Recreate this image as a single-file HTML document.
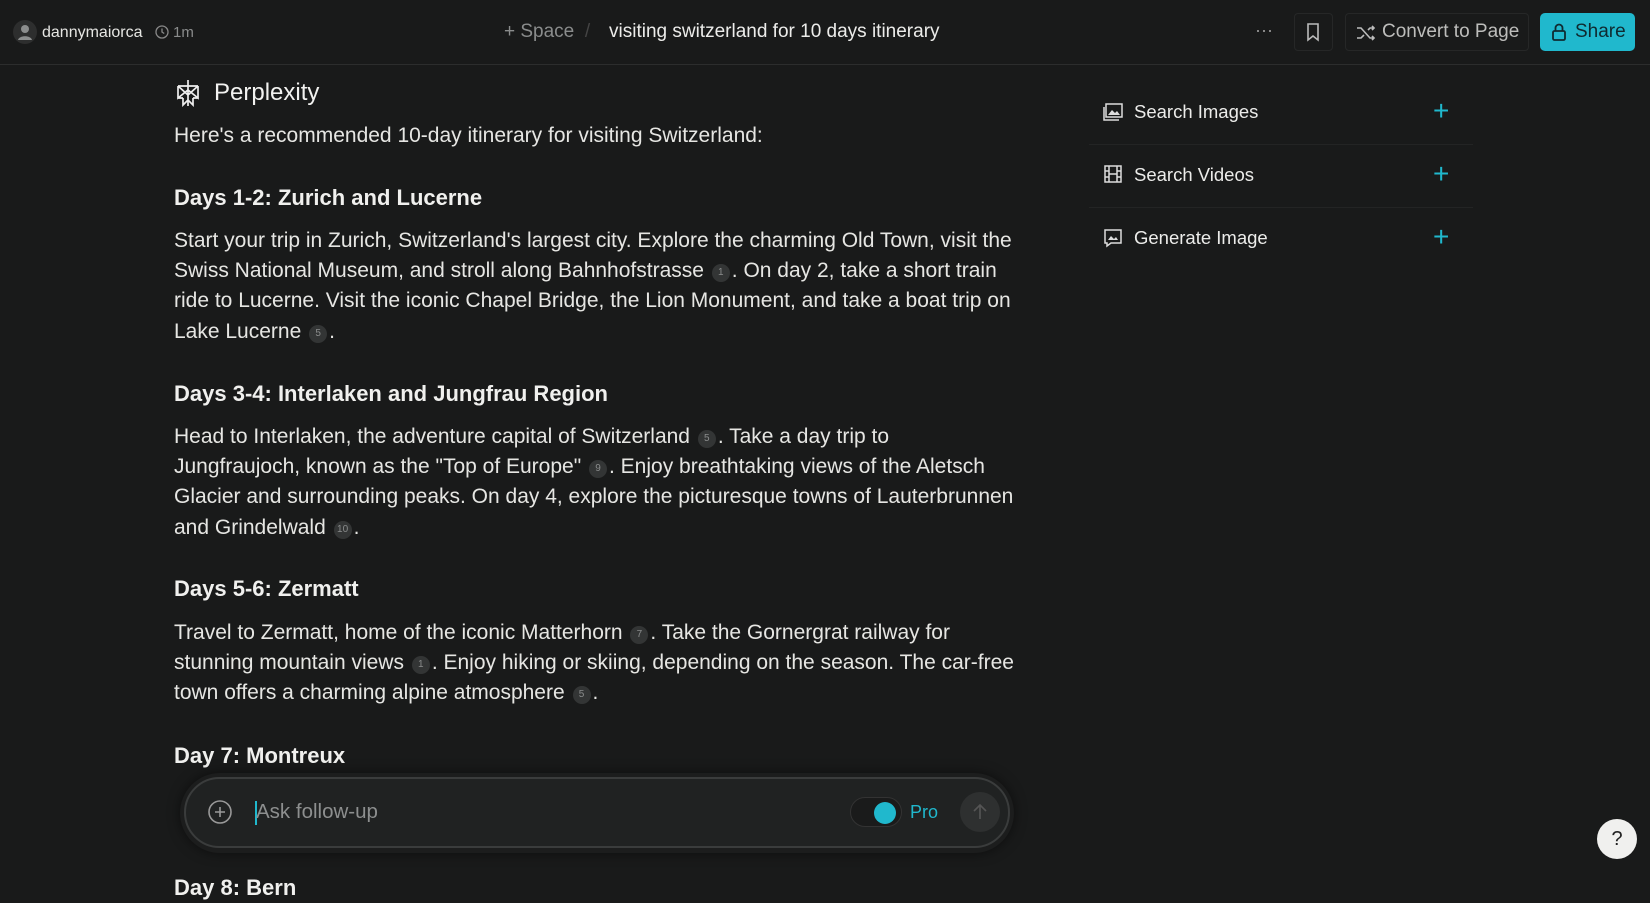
<!DOCTYPE html>
<html><head><meta charset="utf-8"><style>
*{box-sizing:border-box;margin:0;padding:0}
body{width:1650px;height:888px;background:#191a1a;color:#e8e8e6;font-family:"Liberation Sans",sans-serif;overflow:hidden;position:relative}
.hdr{position:absolute;left:0;top:0;width:1650px;height:65px;border-bottom:1px solid #2c2d2d}
.abs{position:absolute;white-space:nowrap}
.t{font-size:21px;color:#e6e6e3;position:absolute;left:174px;white-space:nowrap;line-height:30.2px}
.h{font-size:22px;font-weight:bold;color:#f0f0ee;position:absolute;left:174px;white-space:nowrap;line-height:30px}
.c{display:inline-block;width:18px;height:18px;border-radius:9px;background:#333535;color:#8a8c8c;font-size:10px;line-height:18px;text-align:center;vertical-align:2px;margin:0 2px;font-weight:normal}
.row{position:absolute;left:1089px;width:384px;height:60px;border-bottom:1px solid #232424}
.row span{position:absolute;left:45px;top:16px;font-size:18.5px;color:#ececea}
.row .p{position:absolute;left:344px;top:12px;color:#20b8cd;font-size:28px;font-weight:300;line-height:28px}
</style></head><body>
<div class="hdr"></div>
<svg class="abs" style="left:13px;top:20px" width="24" height="24" viewBox="0 0 24 24"><circle cx="12" cy="12" r="12" fill="#2d2e2e"/><circle cx="12" cy="9" r="4" fill="#8b8d8d"/><path d="M5 20c1-5 13-5 14 0z" fill="#8b8d8d"/></svg>
<div class="abs" style="left:42px;top:24px;font-size:16px;color:#e6e6e3">dannymaiorca</div>
<svg class="abs" style="left:155px;top:25px" width="14" height="14" viewBox="0 0 14 14"><circle cx="7" cy="7" r="6" fill="none" stroke="#888" stroke-width="1.3"/><path d="M7 3.5V7l2.2 1.5" fill="none" stroke="#888" stroke-width="1.3"/></svg>
<div class="abs" style="left:173px;top:24px;font-size:15px;color:#8a8c8c">1m</div>
<div class="abs" style="left:504px;top:21px;font-size:19px;color:#8a8c8c">+ Space&nbsp;&nbsp;<span style="color:#444">/</span></div>
<div class="abs" style="left:609px;top:21px;font-size:19px;color:#ececea">visiting switzerland for 10 days itinerary</div>
<div class="abs" style="left:1255px;top:20px;font-size:18px;color:#999">···</div>
<div class="abs" style="left:1294px;top:13px;width:39px;height:38px;border:1px solid #262727;border-radius:4px"></div>
<svg class="abs" style="left:1305px;top:22px" width="16" height="20" viewBox="0 0 16 20"><path d="M3 2h10v16l-5-4-5 4z" fill="none" stroke="#bbb" stroke-width="1.6"/></svg>
<div class="abs" style="left:1345px;top:13px;width:184px;height:38px;border:1px solid #262727;border-radius:4px"></div>
<svg class="abs" style="left:1356px;top:24px" width="20" height="18" viewBox="0 0 20 18"><path d="M1 4h4l9 10h4M1 14h4l3-3M12 6l2-2h4M16 2l2 2-2 2M16 12l2 2-2 2" fill="none" stroke="#bbb" stroke-width="1.6"/></svg>
<div class="abs" style="left:1382px;top:21px;font-size:19px;color:#bdbdbb">Convert to Page</div>
<div class="abs" style="left:1540px;top:13px;width:95px;height:38px;background:#20b8cd;border-radius:5px"></div>
<svg class="abs" style="left:1551px;top:22px" width="16" height="20" viewBox="0 0 16 20"><rect x="2" y="9" width="12" height="9" rx="1.5" fill="none" stroke="#0f2a30" stroke-width="1.8"/><path d="M4.5 9V6a3.5 3.5 0 0 1 7 0v3" fill="none" stroke="#0f2a30" stroke-width="1.8"/></svg>
<div class="abs" style="left:1575px;top:21px;font-size:19px;color:#0f2a30">Share</div>

<svg class="abs" style="left:175px;top:79px" width="26" height="28" viewBox="0 0 26 28"><path d="M13 1v26M3 7h20M3 7l10 9 10-9M3 7v12l10-8 10 8V7M8 19v7l5-5 5 5v-7M3 19h5M18 19h5" fill="none" stroke="#eee" stroke-width="1.7"/></svg>
<div class="abs" style="left:214px;top:79px;font-size:24px;color:#f2f2f0">Perplexity</div>
<div class="t" style="top:121px">Here's a recommended 10-day itinerary for visiting Switzerland:</div>
<div class="h" style="top:183px">Days 1-2: Zurich and Lucerne</div>
<div class="t" style="top:226px">Start your trip in Zurich, Switzerland's largest city. Explore the charming Old Town, visit the<br>Swiss National Museum, and stroll along Bahnhofstrasse <span class="c">1</span>. On day 2, take a short train<br>ride to Lucerne. Visit the iconic Chapel Bridge, the Lion Monument, and take a boat trip on<br>Lake Lucerne <span class="c">5</span>.</div>
<div class="h" style="top:379px">Days 3-4: Interlaken and Jungfrau Region</div>
<div class="t" style="top:422px">Head to Interlaken, the adventure capital of Switzerland <span class="c">5</span>. Take a day trip to<br>Jungfraujoch, known as the "Top of Europe" <span class="c">9</span>. Enjoy breathtaking views of the Aletsch<br>Glacier and surrounding peaks. On day 4, explore the picturesque towns of Lauterbrunnen<br>and Grindelwald <span class="c">10</span>.</div>
<div class="h" style="top:574px">Days 5-6: Zermatt</div>
<div class="t" style="top:618px">Travel to Zermatt, home of the iconic Matterhorn <span class="c">7</span>. Take the Gornergrat railway for<br>stunning mountain views <span class="c">1</span>. Enjoy hiking or skiing, depending on the season. The car-free<br>town offers a charming alpine atmosphere <span class="c">5</span>.</div>
<div class="h" style="top:741px">Day 7: Montreux</div>
<div class="h" style="top:873px">Day 8: Bern</div>

<div class="abs" style="left:180px;top:773px;width:834px;height:80px;border-radius:40px;background:#1c1d1d;box-shadow:0 0 12px rgba(0,0,0,.5)"></div>
<div class="abs" style="left:184px;top:777px;width:826px;height:71px;border-radius:36px;background:#202222;border:2px solid #3a3c3c"></div>
<svg class="abs" style="left:207px;top:799px" width="26" height="26" viewBox="0 0 26 26"><circle cx="13" cy="13" r="11" fill="none" stroke="#999" stroke-width="1.6"/><path d="M13 8v10M8 13h10" stroke="#999" stroke-width="1.6"/></svg>
<div class="abs" style="left:255px;top:801px;width:2px;height:24px;background:#20b8cd"></div>
<div class="abs" style="left:256px;top:800px;font-size:20.5px;color:#8d8f8f">Ask follow-up</div>
<div class="abs" style="left:850px;top:797px;width:52px;height:30px;border-radius:15px;border:1px solid #333;background:#1a1b1b"></div>
<div class="abs" style="left:874px;top:802px;width:22px;height:22px;border-radius:11px;background:#20b8cd"></div>
<div class="abs" style="left:910px;top:802px;font-size:18px;color:#20b8cd">Pro</div>
<div class="abs" style="left:960px;top:792px;width:40px;height:40px;border-radius:20px;background:#2e3030"></div>
<svg class="abs" style="left:970px;top:802px" width="20" height="20" viewBox="0 0 20 20"><path d="M10 17V3M4 9l6-6 6 6" fill="none" stroke="#555" stroke-width="1.6"/></svg>

<div class="row" style="top:85px"><svg class="abs" style="left:14px;top:18px" width="20" height="18" viewBox="0 0 20 18"><rect x="3" y="1" width="16" height="13" fill="none" stroke="#ddd" stroke-width="1.5"/><path d="M1 4v13h15" fill="none" stroke="#ddd" stroke-width="1.5"/><path d="M5 12l4-5 3 3 2-2 3 4z" fill="#ddd"/></svg><span>Search Images</span><div class="p">+</div></div>
<div class="row" style="top:148px"><svg class="abs" style="left:14px;top:17px" width="20" height="18" viewBox="0 0 20 18"><rect x="2" y="1" width="16" height="16" fill="none" stroke="#ddd" stroke-width="1.5"/><path d="M6 1v16M14 1v16M2 6h4M2 12h4M14 6h4M14 12h4M6 9h8" stroke="#ddd" stroke-width="1.5"/></svg><span>Search Videos</span><div class="p">+</div></div>
<div class="row" style="top:211px;border:none"><svg class="abs" style="left:14px;top:17px" width="20" height="20" viewBox="0 0 20 20"><path d="M2 2h16v13H8l-4 3v-3H2z" fill="none" stroke="#ddd" stroke-width="1.5"/><path d="M5 12l3-4 3 3 2-2 2 3z" fill="#ddd"/></svg><span>Generate Image</span><div class="p">+</div></div>

<div class="abs" style="left:1597px;top:819px;width:40px;height:40px;border-radius:20px;background:#f0f0ee;color:#222;font-size:20px;text-align:center;line-height:40px">?</div>
</body></html>
